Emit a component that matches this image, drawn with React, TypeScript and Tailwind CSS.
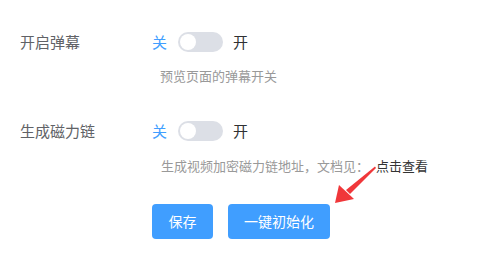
const font = { fontFamily: '"Noto Sans CJK SC", "Noto Sans", sans-serif' };

function Switch() {
  return (
    <div className="flex h-5 w-[45px] items-center rounded-full bg-[#dcdfe6] px-[2px]">
      <div className="h-4 w-4 rounded-full bg-white" />
    </div>
  );
}

function SwitchRow({ label }: { label: string }) {
  return (
    <div className="flex h-5 items-center">
      <span className="w-[152px] pl-5 text-[15px] leading-5 text-[#606266]">{label}</span>
      <span className="mr-[11px] text-[15px] leading-5 text-[#409eff]">关</span>
      <Switch />
      <span className="ml-[10px] text-[15px] leading-5 text-[#303133]">开</span>
    </div>
  );
}

export default function App() {
  return (
    <div className="relative h-[258px] w-[495px] bg-white" style={font}>
      <div className="flex flex-col pt-8">
        <SwitchRow label="开启弹幕" />
        <p className="mt-[15px] pl-[160px] text-[13px] leading-[18px] text-[#999]">预览页面的弹幕开关</p>
        <div className="mt-[36px]">
          <SwitchRow label="生成磁力链" />
        </div>
        <p className="mt-4 pl-[161px] text-[13px] leading-[18px] text-[#999]">
          生成视频加密磁力链地址，文档见：
          <span className="ml-[7px] text-[#333]">点击查看</span>
        </p>
        <div className="mt-[29px] flex gap-[15px] pl-[152px]">
          <button className="h-[35px] w-[61px] rounded-[4px] bg-[#409eff] text-[14px] text-white">保存</button>
          <button className="h-[35px] w-[102px] rounded-[4px] bg-[#409eff] text-[14px] text-white">一键初始化</button>
        </div>
      </div>
      <svg className="absolute left-0 top-0" width="495" height="258" viewBox="0 0 495 258">
        <polygon points="375,166.5 376,168 350,194 346,190" fill="#f0373a" />
        <polygon points="335,203 339,185 354,199" fill="#f0373a" />
      </svg>
    </div>
  );
}
